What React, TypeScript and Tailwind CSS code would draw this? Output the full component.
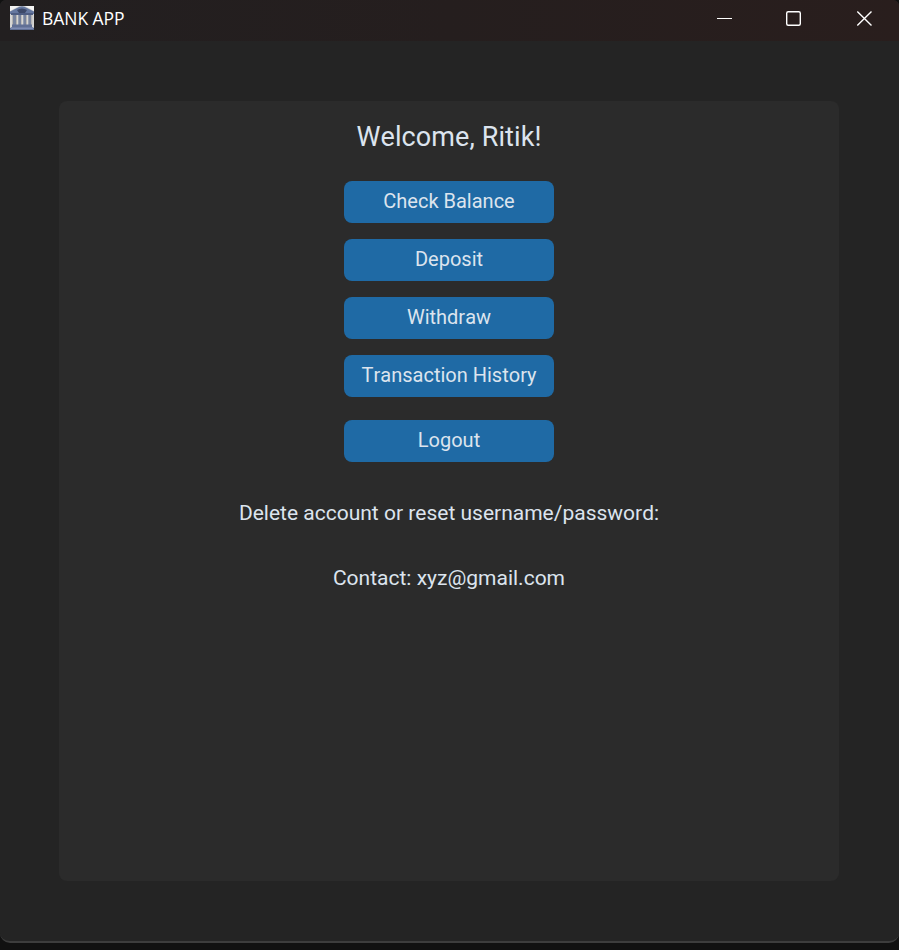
const actions = ["Check Balance", "Deposit", "Withdraw", "Transaction History"];

function BankIcon() {
  return (
    <svg width="24" height="24" viewBox="0 0 24 24">
      <rect width="24" height="24" fill="#d6d5d4" />
      <path d="M0 0h9L0 5zM24 0h-9l9 5z" fill="#f4f4f4" />
      <path d="M0 5.5 7 2Q12-1.5 17 2l7 3.5V8H0z" fill="#65779f" />
      <path d="M7 4q5-3 10 0l-2 3H9z" fill="#3d4969" />
      <path d="M1 7h22v2H1z" fill="#4e5d82" />
      <path d="M3 9h3v10H3zM8.3 9h2.7v10H8.3zM13.3 9H16v10h-2.7zM18.3 9h3v10h-3z" fill="#77839e" />
      <path d="M2 9h1v10H2zM6 9h1v10H6zM11 9h.7v10H11zM16 9h1v10h-1zM21.3 9h1v10h-1z" fill="#b4b3b1" />
      <path d="M2 18.5h20V21l2 1v2H0v-2l2-1z" fill="#606f95" />
      <path d="M1 21.5h22V23H1z" fill="#7e8cb4" />
    </svg>
  );
}

function WindowControls() {
  return (
    <div className="ml-auto flex items-center pt-[10px] pr-[27px]">
      <svg className="mr-[53px]" width="16" height="17" viewBox="0 0 16 17" fill="none" stroke="white"><path d="M1 8.5h15" /></svg>
      <svg className="mr-[54px]" width="16" height="17" viewBox="0 0 16 17" fill="none" stroke="white" strokeWidth="1.4"><rect x="1.7" y="1.7" width="13.6" height="13.6" rx="1.5" /></svg>
      <svg width="17" height="17" viewBox="0 0 17 17" fill="none" stroke="white" strokeWidth="1.4"><path d="m2.3 1.5 14.2 14m0-14-14.2 14" /></svg>
    </div>
  );
}

function ActionButton({ label }: { label: string }) {
  return (
    <button className="h-[42px] w-[210px] rounded-lg bg-[#1f6aa5] pb-[2px] text-[20px] text-[#dce4ee] [font-kerning:none]">{label}</button>
  );
}

export default function App() {
  return (
    <div className="h-[950px] w-[899px] bg-[#111111] font-['Roboto',sans-serif]">
      <div className="h-[943px] overflow-hidden rounded-t-[6px] rounded-b-[10px] border-b-2 border-[#3d3d3d] bg-[#242424]">
        <header className="flex h-[41px] items-start bg-linear-to-r from-[#221f20] via-[#251e1e] to-[#291e1d] pl-[10px]">
          <div className="pt-[6px]"><BankIcon /></div>
          <h1 className="pt-[6px] pl-2 font-['Open_Sans',sans-serif] text-[17.5px] leading-[25px] tracking-[-0.05px] text-white">BANK APP</h1>
          <WindowControls />
        </header>
        <main className="mt-[60px] ml-[59px] flex h-[780px] w-[780px] flex-col items-center rounded-lg bg-[#2b2b2b] text-[#dce4ee] [font-kerning:none]">
          <h2 className="mt-[18px] text-[27px] leading-9 tracking-[0.1px]">Welcome, Ritik!</h2>
          <div className="mt-[26px] flex flex-col gap-4">{actions.map((a) => <ActionButton key={a} label={a} />)}</div>
          <div className="mt-[23px]"><ActionButton label="Logout" /></div>
          <p className="mt-[36px] text-[21px] leading-[30px]">Delete account or reset username/password:</p>
          <p className="mt-[35px] text-[21px] leading-[30px]">Contact: xyz@gmail.com</p>
        </main>
      </div>
    </div>
  );
}
